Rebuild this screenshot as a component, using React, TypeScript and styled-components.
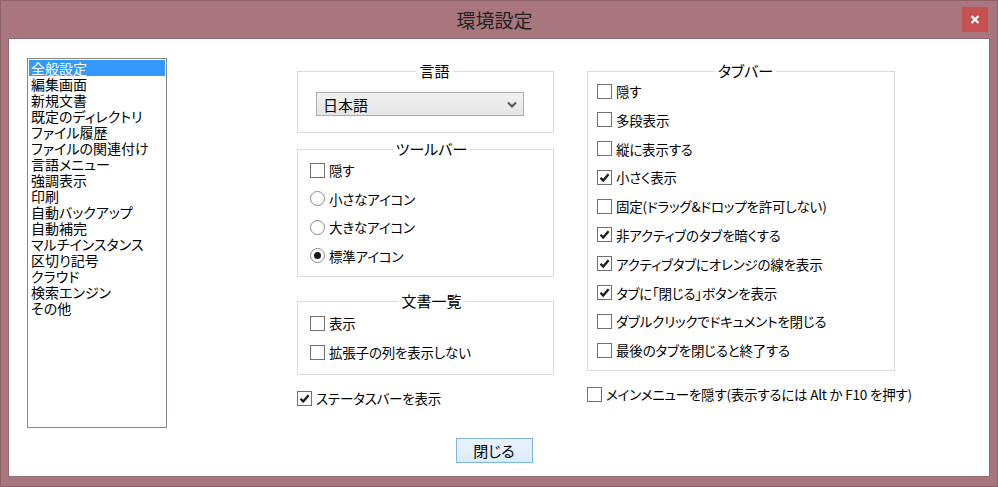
import React from "react";
import styled, { createGlobalStyle } from "styled-components";

const GlobalStyle = createGlobalStyle`
  html, body {
    margin: 0;
    padding: 0;
    background: #a8767c;
  }
  body {
    font-family: "Noto Sans CJK JP", "Noto Sans", sans-serif;
    font-feature-settings: "palt";
    color: #000;
  }
  * {
    box-sizing: border-box;
  }
`;

const Window = styled.div`
  width: 998px;
  height: 487px;
  display: flex;
  flex-direction: column;
  background: #a8767c;
  border: 1px solid #8d6268;
`;

const TitleBar = styled.div`
  height: 37px;
  flex: none;
  display: grid;
  grid-template-columns: 1fr auto 1fr;
  align-items: center;
  padding-right: 9px;
`;

const Title = styled.div`
  grid-column: 2;
  font-size: 19px;
  line-height: 22px;
  color: #222;
`;

const CloseButton = styled.div`
  grid-column: 3;
  justify-self: end;
  align-self: start;
  margin-top: 6px;
  width: 26px;
  height: 25px;
  background: #c75050;
  display: flex;
  align-items: center;
  justify-content: center;
`;

const Client = styled.div`
  flex: 1;
  margin: 0 7px 9px 7px;
  background: #fff;
  border: 1px solid #946a70;
  padding: 19px 0 0 18px;
  display: flex;
  flex-direction: column;
`;

const MainRow = styled.div`
  display: flex;
  align-items: flex-start;
`;

const CategoryList = styled.ul`
  list-style: none;
  margin: 0;
  padding: 1px;
  width: 140px;
  height: 370px;
  border: 1px solid #828790;
`;

const CategoryItem = styled.li<{ $active?: boolean }>`
  height: 16px;
  line-height: 16px;
  font-size: 14px;
  padding-left: 2px;
  white-space: nowrap;
  background: ${(p) => (p.$active ? "#3399ff" : "transparent")};
  color: ${(p) => (p.$active ? "#fff" : "#000")};
`;

const Column = styled.div<{ $left: number; $width: number }>`
  margin-left: ${(p) => p.$left}px;
  margin-top: 4px;
  width: ${(p) => p.$width}px;
  display: flex;
  flex-direction: column;
`;

const Group = styled.fieldset<{ $pt: number; $pb: number; $pl: number; $gap: number; $mt?: number }>`
  margin: ${(p) => p.$mt ?? 0}px 0 0 0;
  min-width: 0;
  border: 1px solid #dcdcdc;
  padding: ${(p) => p.$pt}px 0 ${(p) => p.$pb}px ${(p) => p.$pl}px;
  display: flex;
  flex-direction: column;
  gap: ${(p) => p.$gap}px;
`;

const Legend = styled.legend`
  margin: 0 auto;
  padding: 0 3px;
  font-size: 15px;
  line-height: 18px;
`;

const SelectBox = styled.div`
  width: 208px;
  height: 24px;
  border: 1px solid #acacac;
  background: linear-gradient(#f0f0f0, #e5e5e5);
  display: flex;
  align-items: center;
  justify-content: space-between;
  padding: 0 6px 0 6px;
  font-size: 15px;
`;

const Option = styled.label<{ $mt?: number }>`
  height: 22px;
  margin-top: ${(p) => p.$mt ?? 0}px;
  display: flex;
  align-items: center;
  gap: 4px;
  font-size: 13.5px;
  letter-spacing: -0.2px;
  white-space: nowrap;
`;

const Box = styled.span`
  width: 15px;
  height: 15px;
  flex: none;
  border: 1px solid #707070;
  background: #fff;
  display: flex;
  align-items: center;
  justify-content: center;
`;

const Radio = styled.span`
  width: 15px;
  height: 15px;
  flex: none;
  border: 1px solid #8a8a8a;
  border-radius: 50%;
  background: #fff;
  display: flex;
  align-items: center;
  justify-content: center;
`;

const Dot = styled.span`
  width: 7px;
  height: 7px;
  border-radius: 50%;
  background: #1a1a1a;
`;

const Footer = styled.div`
  display: flex;
  justify-content: center;
  padding-right: 28px;
  margin-top: 10px;
`;

const Button = styled.div`
  width: 77px;
  height: 25px;
  border: 1px solid #7eb4ea;
  background: linear-gradient(#e8f2fc, #dcecfc);
  display: flex;
  align-items: center;
  justify-content: center;
  font-size: 15px;
`;

const Check = ({ checked, children, mt }: { checked?: boolean; children: React.ReactNode; mt?: number }) => (
  <Option $mt={mt}>
    <Box>
      {checked && (
        <svg width="11" height="11" viewBox="0 0 11 11">
          <path d="M1.5 5.8 L4.2 8.5 L9.6 2.2" fill="none" stroke="#1a1a1a" strokeWidth="2.3" />
        </svg>
      )}
    </Box>
    <span>{children}</span>
  </Option>
);

const RadioOption = ({ checked, children }: { checked?: boolean; children: React.ReactNode }) => (
  <Option>
    <Radio>{checked && <Dot />}</Radio>
    <span>{children}</span>
  </Option>
);

const categories = [
  "全般設定",
  "編集画面",
  "新規文書",
  "既定のディレクトリ",
  "ファイル履歴",
  "ファイルの関連付け",
  "言語メニュー",
  "強調表示",
  "印刷",
  "自動バックアップ",
  "自動補完",
  "マルチインスタンス",
  "区切り記号",
  "クラウド",
  "検索エンジン",
  "その他",
];

const tabOptions: [string, boolean][] = [
  ["隠す", false],
  ["多段表示", false],
  ["縦に表示する", false],
  ["小さく表示", true],
  ["固定(ドラッグ&ドロップを許可しない)", false],
  ["非アクティブのタブを暗くする", true],
  ["アクティブタブにオレンジの線を表示", true],
  ["タブに「閉じる」ボタンを表示", true],
  ["ダブルクリックでドキュメントを閉じる", false],
  ["最後のタブを閉じると終了する", false],
];

export default function App() {
  return (
    <>
      <GlobalStyle />
      <Window>
        <TitleBar>
          <Title>環境設定</Title>
          <CloseButton>
            <svg width="10" height="9" viewBox="0 0 10 9">
              <path d="M1.5 1 L8.5 8 M8.5 1 L1.5 8" stroke="#fff" strokeWidth="2.2" />
            </svg>
          </CloseButton>
        </TitleBar>
        <Client>
          <MainRow>
            <CategoryList>
              {categories.map((c, i) => (
                <CategoryItem key={c} $active={i === 0}>
                  {c}
                </CategoryItem>
              ))}
            </CategoryList>

            <Column $left={130} $width={257}>
              <Group $pt={12} $pb={16} $pl={18} $gap={0}>
                <Legend>言語</Legend>
                <SelectBox>
                  <span>日本語</span>
                  <svg width="10" height="7" viewBox="0 0 10 7">
                    <path d="M1 1.5 L5 5.5 L9 1.5" fill="none" stroke="#555" strokeWidth="2" />
                  </svg>
                </SelectBox>
              </Group>
              <Group $mt={7} $pt={1} $pb={9.5} $pl={12} $gap={6.5}>
                <Legend>ツールバー</Legend>
                <Check>隠す</Check>
                <RadioOption>小さなアイコン</RadioOption>
                <RadioOption>大きなアイコン</RadioOption>
                <RadioOption checked>標準アイコン</RadioOption>
              </Group>
              <Group $mt={15} $pt={2} $pb={11} $pl={12} $gap={7}>
                <Legend>文書一覧</Legend>
                <Check>表示</Check>
                <Check>拡張子の列を表示しない</Check>
              </Group>
              <Check checked mt={12}>
                ステータスバーを表示
              </Check>
            </Column>

            <Column $left={33} $width={308}>
              <Group $pt={0} $pb={9} $pl={9} $gap={6.8}>
                <Legend>タブバー</Legend>
                {tabOptions.map(([label, on]) => (
                  <Check key={label} checked={on}>
                    {label}
                  </Check>
                ))}
              </Group>
              <Check mt={12}>メインメニューを隠す(表示するには Alt か F10 を押す)</Check>
            </Column>
          </MainRow>
          <Footer>
            <Button>閉じる</Button>
          </Footer>
        </Client>
      </Window>
    </>
  );
}
